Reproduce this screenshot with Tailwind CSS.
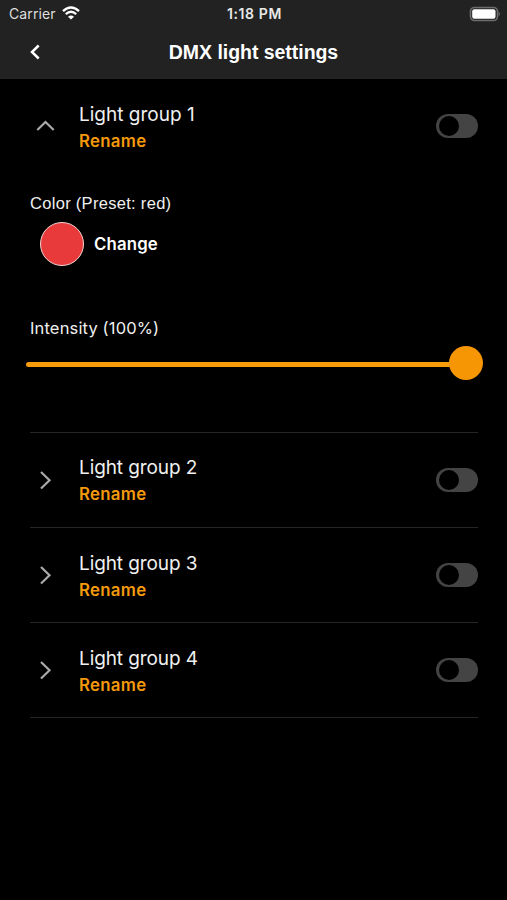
<!DOCTYPE html>
<html lang="en">
<head>
<meta charset="utf-8">
<meta name="viewport" content="width=device-width, initial-scale=1">
<title>DMX light settings</title>
<script src="https://cdn.jsdelivr.net/npm/@tailwindcss/browser@4"></script>
</head>
<body class="bg-black text-[#f0f0f0] font-['Inter','Liberation_Sans',sans-serif] h-[900px] overflow-hidden">
<header class="bg-[#222222] h-[79px]">
  <div class="grid grid-cols-3 items-center h-7 pl-[9px] pr-[7px]">
    <div class="flex items-center gap-[6px] text-[14px] leading-7 tracking-[0.1px] text-[#dedede]">
      <span>Carrier</span>
      <svg class="w-[18px] h-[14px] -mt-0.5" viewBox="0 0 18 14" fill="none" stroke="#fff" stroke-width="2.3"><path d="M1 5.2Q9-2.2 17 5.2M3.8 8.1Q9 3.5 14.2 8.1"/><path d="M9 13.6 6 10.7Q9 8.2 12 10.7Z" fill="#fff" stroke="none"/></svg>
    </div>
    <div class="text-center text-[14px] leading-7 font-semibold tracking-[0.6px] whitespace-nowrap text-[#e8e8e8]">1:18 PM</div>
    <svg class="w-[32px] h-[16px] justify-self-end -mt-px translate-x-px" viewBox="0 0 32 16"><rect x="1.5" y="1.5" width="27" height="13" rx="4" fill="#222" stroke="#6c6c6c" stroke-width="1.6"/><rect x="3.2" y="3.2" width="23.3" height="9.6" rx="2" fill="#fff"/><path d="M29.6 5.6Q32.2 8 29.6 10.4Z" fill="#6c6c6c"/></svg>
  </div>
  <div class="grid grid-cols-[60px_1fr_60px] items-center h-12">
    <svg class="w-3 h-4 ml-[29px] -mt-px" viewBox="0 0 12 16" fill="none" stroke="#fff" stroke-width="2.5"><path d="M9.7 1.5 3 8l6.7 6.5"/></svg>
    <h1 class="text-center font-['Liberation_Sans',sans-serif] text-[19.5px] tracking-[-0.04px] font-bold text-white whitespace-nowrap pt-px">DMX light settings</h1>
  </div>
</header>
<main class="pl-[30px] pr-[29px]">
  <section class="h-[353.5px] border-b-[1.5px] border-[#262626]">
    <div class="flex items-center h-[95px]">
      <svg class="w-[30px] h-[20px] -mt-px" viewBox="0 0 30 20" fill="none" stroke="#aaa" stroke-width="2.2"><path d="m7.3 14 8.2-8 8.2 8"/></svg>
      <div class="ml-[19px] flex-1 pt-[2px]">
        <div class="text-[19px] leading-[27px]">Light group 1</div>
        <div class="text-[16.8px] leading-[27px] tracking-[0.3px] font-semibold text-[#f59a0b]">Rename</div>
      </div>
      <div class="w-[42px] h-[24px] -mt-px rounded-full bg-[#444] p-[2px] pl-[3px]"><div class="size-5 rounded-full bg-black"></div></div>
    </div>
    <div class="mt-[17px] font-['Liberation_Sans',sans-serif] text-[16.5px] tracking-[0.3px] leading-6">Color (Preset: red)</div>
    <div class="flex items-center gap-[10px] mt-[7px] pl-[10px]">
      <div class="size-[44px] rounded-full bg-[#e83a3a] border-[1.5px] border-[#f3d4d4]"></div>
      <span class="text-[16.8px] tracking-[0.15px] pt-[2px] font-semibold text-white">Change</span>
    </div>
    <div class="mt-[50px] text-[16.5px] leading-6 tracking-[0.15px]">Intensity (100%)</div>
    <div class="flex items-center h-[34px] mt-[6px] -ml-[4px] -mr-[5px]">
      <div class="h-[5px] flex-1 rounded-l-full bg-[#f99c0b] mt-[2px]"></div>
      <div class="size-[34px] rounded-full bg-[#f79605] -ml-px"></div>
    </div>
  </section>
  <section class="flex items-center h-[95.2px] border-b-[1.5px] border-[#262626]">
    <svg class="w-[30px] h-[20px]" viewBox="0 0 30 20" fill="none" stroke="#aaa" stroke-width="2.2"><path d="m11 2 8.5 8.3-8.5 8.2"/></svg>
    <div class="ml-[19px] flex-1 pt-[3.5px]">
      <div class="text-[19px] leading-[27px] tracking-[-0.1px]">Light group 2</div>
      <div class="text-[16.8px] leading-[27px] tracking-[0.3px] font-semibold text-[#f59a0b]">Rename</div>
    </div>
    <div class="w-[42px] h-[24px] rounded-full bg-[#444] p-[2px] pl-[3px]"><div class="size-5 rounded-full bg-black"></div></div>
  </section>
  <section class="flex items-center h-[95.2px] border-b-[1.5px] border-[#262626]">
    <svg class="w-[30px] h-[20px]" viewBox="0 0 30 20" fill="none" stroke="#aaa" stroke-width="2.2"><path d="m11 2 8.5 8.3-8.5 8.2"/></svg>
    <div class="ml-[19px] flex-1 pt-[4.5px]">
      <div class="text-[19px] leading-[27px] tracking-[-0.1px]">Light group 3</div>
      <div class="text-[16.8px] leading-[27px] tracking-[0.3px] font-semibold text-[#f59a0b]">Rename</div>
    </div>
    <div class="w-[42px] h-[24px] rounded-full bg-[#444] p-[2px] pl-[3px]"><div class="size-5 rounded-full bg-black"></div></div>
  </section>
  <section class="flex items-center h-[95.2px] border-b-[1.5px] border-[#262626]">
    <svg class="w-[30px] h-[20px]" viewBox="0 0 30 20" fill="none" stroke="#aaa" stroke-width="2.2"><path d="m11 2 8.5 8.3-8.5 8.2"/></svg>
    <div class="ml-[19px] flex-1 pt-[4.5px]">
      <div class="text-[19px] leading-[27px] tracking-[-0.1px]">Light group 4</div>
      <div class="text-[16.8px] leading-[27px] tracking-[0.3px] font-semibold text-[#f59a0b]">Rename</div>
    </div>
    <div class="w-[42px] h-[24px] rounded-full bg-[#444] p-[2px] pl-[3px]"><div class="size-5 rounded-full bg-black"></div></div>
  </section>
</main>
</body>
</html>
